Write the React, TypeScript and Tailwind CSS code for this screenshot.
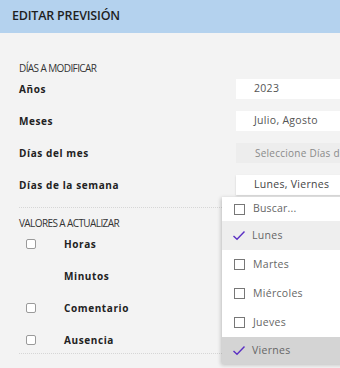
import { Fragment } from 'react';

const topRows = [
  { label: 'Años', value: '2023', kind: 'input' },
  { label: 'Meses', value: 'Julio, Agosto', kind: 'input' },
  { label: 'Días del mes', value: 'Seleccione Días de', kind: 'disabled' },
  { label: 'Días de la semana', value: 'Lunes, Viernes', kind: 'open' },
];

const valueRows = [
  { label: 'Horas', check: true },
  { label: 'Minutos', check: false },
  { label: 'Comentario', check: true },
  { label: 'Ausencia', check: true },
];

const days = [
  { name: 'Lunes', selected: true, bg: 'bg-[#eeeeee]', h: 'h-[29px]' },
  { name: 'Martes', selected: false, bg: 'bg-white', h: 'h-[29px]' },
  { name: 'Miércoles', selected: false, bg: 'bg-white', h: 'h-[29px]' },
  { name: 'Jueves', selected: false, bg: 'bg-white', h: 'h-[29px]' },
  { name: 'Viernes', selected: true, bg: 'bg-[#d4d4d4]', h: 'h-[27px]' },
];

function Tick() {
  return (
    <svg width="14" height="11" viewBox="0 0 14 11" className="shrink-0">
      <polyline points="1.5,6 5,9.2 12.5,1.5" fill="none" stroke="#5a2fc4" strokeWidth="1.4" />
    </svg>
  );
}

export default function App() {
  return (
    <div
      className="relative w-[340px] h-[368px] overflow-hidden bg-[#f3f3f3] text-[#222]"
      style={{ fontFamily: '"Open Sans", "Noto Sans", sans-serif' }}
    >
      {/* Header */}
      <div className="h-[33px] bg-[#b4d2ee] pl-3 flex items-center">
        <h1 className="text-[12.5px] font-semibold tracking-[-0.2px] text-[#1f1f1f]">EDITAR PREVISIÓN</h1>
      </div>

      <div className="pl-[19px] pt-[29px]">
        <div className="h-[12px] leading-[12px] text-[10px] tracking-[-0.6px] text-[#333]">DÍAS A MODIFICAR</div>

        <div className="mt-[2px] flex flex-col gap-[6px]">
          {topRows.map((row) => (
            <div key={row.label} className="h-[26px] flex items-center">
              <div className="w-[217px] shrink-0 text-[10px] font-bold tracking-[0.6px] text-[#222]">{row.label}</div>
              <div
                className={`w-[120px] h-[20px] shrink-0 flex items-center whitespace-nowrap overflow-hidden text-[10.5px] ${
                  row.kind === 'disabled'
                    ? 'bg-[#ededed] text-[#8a8a8a] pl-[19px] text-[10px] tracking-[0.25px]'
                    : row.kind === 'open'
                      ? 'bg-white text-[#444] pl-[18px] tracking-[0.3px] shadow-[0_1px_2px_rgba(0,0,0,0.15)]'
                      : 'bg-white text-[#555] pl-[18px] tracking-[0.3px]'
                }`}
              >
                {row.value}
              </div>
            </div>
          ))}
        </div>

        <div className="mt-[9px] border-t border-dotted border-[#d6d6d6]" />

        <div className="mt-[9px] h-[12px] leading-[12px] text-[10px] tracking-[-0.6px] text-[#333]">VALORES A ACTUALIZAR</div>

        <div className="mt-[2px] flex flex-col gap-[6px]">
          {valueRows.map((row) => (
            <Fragment key={row.label}>
              <div className="h-[26px] flex items-center">
                <div className="w-[45px] shrink-0 pl-[7px]">
                  {row.check && <div className="w-[10px] h-[10px] rounded-[2px] border border-[#9a9a9a] bg-white" />}
                </div>
                <div className="text-[10px] font-bold tracking-[0.6px] text-[#222]">{row.label}</div>
              </div>
            </Fragment>
          ))}
        </div>

        <div className="border-t border-dotted border-[#d6d6d6]" />
      </div>

      {/* Open dropdown for Días de la semana */}
      <div className="absolute left-[222px] top-[197px] w-[130px] bg-white shadow-[-1px_1px_4px_rgba(0,0,0,0.22)]">
        <div className="h-[24px] flex items-center pl-[12px] gap-[8px] text-[10.5px] text-[#666] tracking-[0.2px]">
          <div className="w-[11px] h-[11px] border-[1.5px] border-[#777] bg-white" />
          <span>Buscar...</span>
        </div>
        {days.map((d) => (
          <div
            key={d.name}
            className={`${d.h} ${d.bg} flex items-center pl-[10px] gap-[6px] text-[10.5px] text-[#666] tracking-[0.3px]`}
          >
            {d.selected ? (
              <Tick />
            ) : (
              <div className="ml-[2px] mr-[2px] w-[11px] h-[11px] border-[1.5px] border-[#777] bg-white" />
            )}
            <span>{d.name}</span>
          </div>
        ))}
      </div>
    </div>
  );
}
